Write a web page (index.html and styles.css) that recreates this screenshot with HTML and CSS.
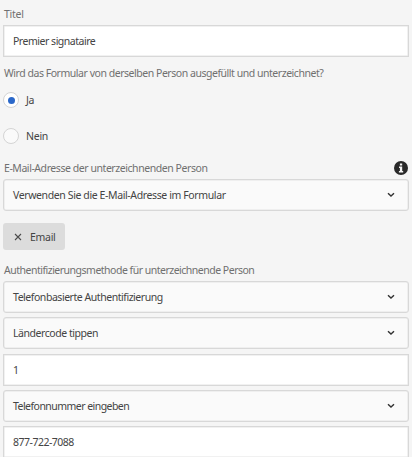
FILE: index.html
```
<!DOCTYPE html>
<html lang="de">
<head>
<meta charset="utf-8">
<title>Unterzeichner</title>
<link rel="stylesheet" href="styles.css">
</head>
<body>
<form class="form">
  <div class="label label-title"><span>Titel</span></div>
  <div class="field input"><span class="t-title">Premier signataire</span></div>
  <div class="label label-question"><span class="t-question">Wird das Formular von derselben Person ausgefüllt und unterzeichnet?</span></div>
  <div class="radio"><span class="dot checked"></span><span>Ja</span></div>
  <div class="radio second"><span class="dot"></span><span>Nein</span></div>
  <div class="label label-mail"><span class="t-mail">E-Mail-Adresse der unterzeichnenden Person</span>
    <svg class="info" viewBox="0 0 14 14"><circle cx="7" cy="7" r="7" fill="#292929"/><path d="M5.9 2.4h2.3v2H5.9zM5 5.6h3.2v4.5h1v1.4H4.9v-1.4h1V7H5z" fill="#f5f5f5"/></svg>
  </div>
  <div class="field select"><span class="t-use">Verwenden Sie die E-Mail-Adresse im Formular</span><svg class="chevron" viewBox="0 0 8 6"><path d="M1 1.2 4 4l3-2.8"/></svg></div>
  <div class="chip"><svg class="close" viewBox="0 0 8 8"><path d="M1 1l6 6M7 1 1 7"/></svg><span class="t-chip">Email</span></div>
  <div class="label label-auth"><span class="t-auth">Authentifizierungsmethode für unterzeichnende Person</span></div>
  <div class="stack">
    <div class="field select"><span class="t-phone">Telefonbasierte Authentifizierung</span><svg class="chevron" viewBox="0 0 8 6"><path d="M1 1.2 4 4l3-2.8"/></svg></div>
    <div class="field select"><span class="t-code">Ländercode tippen</span><svg class="chevron" viewBox="0 0 8 6"><path d="M1 1.2 4 4l3-2.8"/></svg></div>
    <div class="field input"><span>1</span></div>
    <div class="field select"><span class="t-number">Telefonnummer eingeben</span><svg class="chevron" viewBox="0 0 8 6"><path d="M1 1.2 4 4l3-2.8"/></svg></div>
    <div class="field input"><span class="t-digits">877-722-7088</span></div>
  </div>
</form>
</body>
</html>
```
FILE: styles.css
```
* { box-sizing: border-box; }
html, body { height: 100%; overflow: hidden; }
body {
  margin: 0;
  background: #f5f5f5;
  color: #444;
  font: 10.5px/14px "Noto Sans", sans-serif;
  letter-spacing: -0.25px;
  white-space: nowrap;
}
.form { padding: 7px 3px 0; }
.label { display: flex; align-items: center; justify-content: space-between; height: 14px; padding-left: 1px; color: #707070; }
.label-title { margin-bottom: 4px; }
.label-question { margin-top: 9px; }
.label-mail { margin-top: 17px; margin-bottom: 4px; padding-right: 1.5px; }
.label-auth { margin-top: 13px; margin-bottom: 4px; }
.t-title { letter-spacing: -0.48px; }
.t-question { letter-spacing: -0.465px; }
.t-mail { letter-spacing: -0.44px; }
.t-use { letter-spacing: -0.385px; }
.t-auth { letter-spacing: -0.5px; }
.t-phone { letter-spacing: -0.46px; }
.t-code { letter-spacing: -0.45px; }
.t-number { letter-spacing: -0.54px; }
.t-digits { letter-spacing: -0.5px; }
.t-chip { letter-spacing: -0.3px; }
.field {
  display: flex;
  align-items: center;
  justify-content: space-between;
  height: 32px;
  padding: 0 13px 0 9px;
  border: 1px solid #d8d8d8;
  box-shadow: inset 0 0 0 0.5px #e4e4e4;
}
.input { background: #fff; }
.select { background: #fafafa; border-radius: 3px; }
.chevron { width: 8px; height: 6px; fill: none; stroke: #323232; stroke-width: 1.4; }
.radio { display: flex; align-items: center; gap: 7px; height: 16px; margin-top: 12px; }
.radio.second { margin-top: 20px; }
.dot { display: grid; place-items: center; width: 16px; height: 16px; border: 1px solid #d4d4d4; border-radius: 50%; background: #fafafa; }
.checked { background: #fff; }
.checked::after { content: ""; width: 7px; height: 7px; border-radius: 50%; background: #2b68c9; }
.info { width: 14px; height: 14px; }
.chip { display: flex; align-items: center; gap: 8px; width: 62px; height: 27px; margin-top: 12px; padding-left: 11px; background: #dcdcdc; border-radius: 3px; }
.close { width: 8px; height: 8px; stroke: #4b4b4b; stroke-width: 1.1; }
.stack { display: grid; row-gap: 4.3px; }
```
